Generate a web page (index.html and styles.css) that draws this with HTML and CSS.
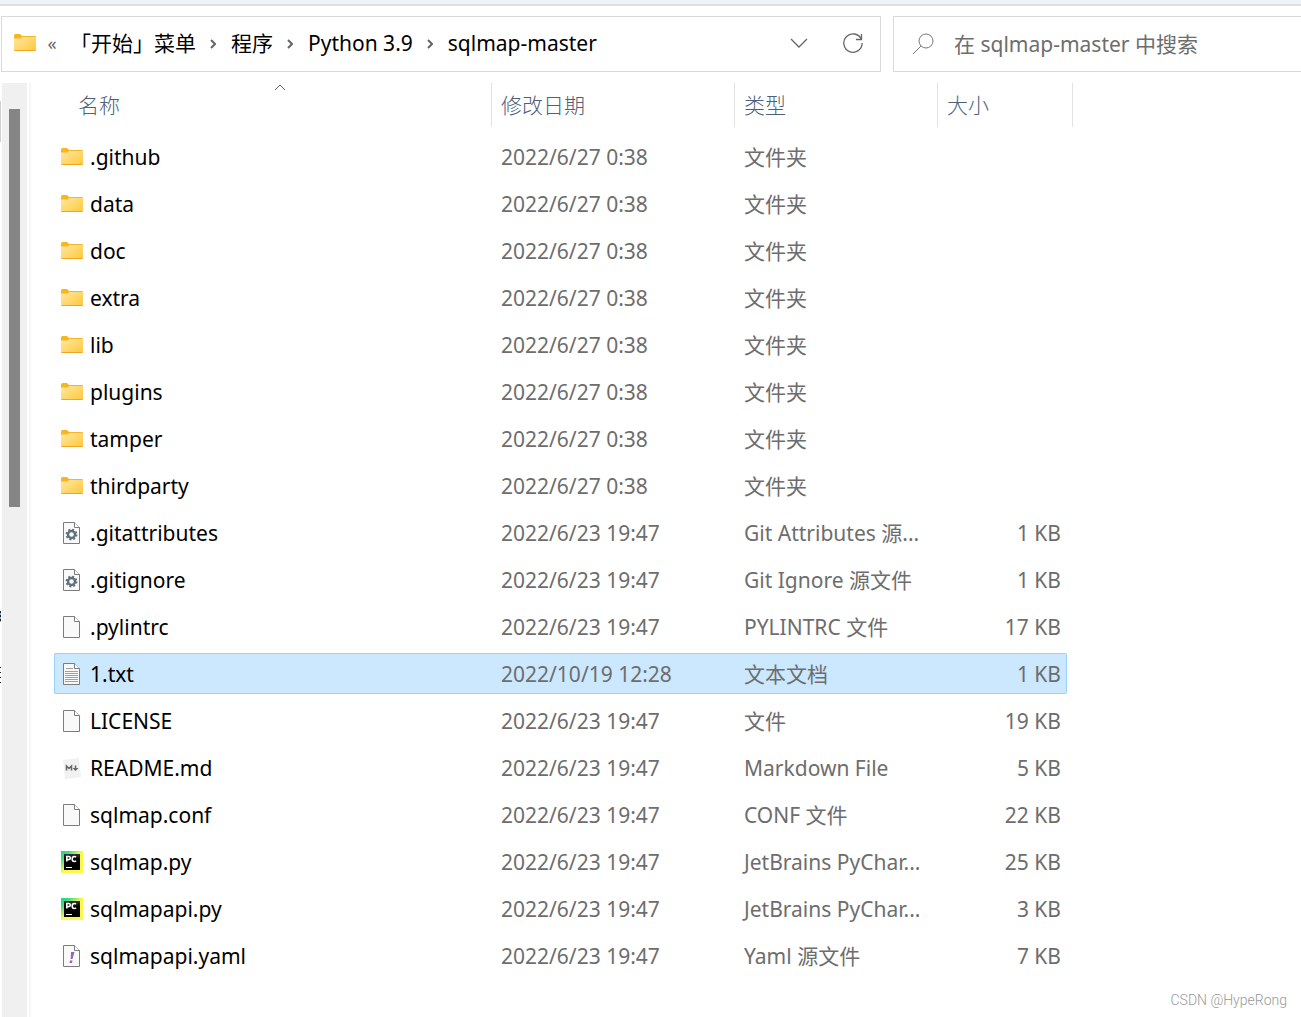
FILE: index.html
```html
<!DOCTYPE html>
<html lang="zh-CN">
<head>
<meta charset="utf-8">
<title>sqlmap-master</title>
<link rel="stylesheet" href="styles.css">
</head>
<body>
<svg class="defs" width="0" height="0" aria-hidden="true">
  <defs>
    <linearGradient id="folder-fill" x1="0" y1="0" x2="1" y2="1"><stop offset="0" stop-color="#ffe9a6"/><stop offset="1" stop-color="#ffc83a"/></linearGradient>
    <linearGradient id="pc-fill" x1="0" y1="0" x2="1" y2="1"><stop offset="0" stop-color="#21d789"/><stop offset="0.2" stop-color="#3ddc84"/><stop offset="0.5" stop-color="#fcf84a"/><stop offset="1" stop-color="#fcf84a"/></linearGradient>
    <linearGradient id="pc-box" x1="0" y1="0" x2="0" y2="1"><stop offset="0" stop-color="#333"/><stop offset="0.35" stop-color="#000"/></linearGradient>
    <symbol id="folder" viewBox="0 0 22 22"><path d="M0 3.5Q0 2 1.5 2H6l2 2v3H0z" fill="#f8b61c"/><path d="M0 6.5H7L8.5 4H21q1 0 1 1v13q0 1-1 1H1q-1 0-1-1z" fill="url(#folder-fill)"/><path d="M8 4.5H21.5" stroke="#f3b52c" fill="none"/><path d="M.5 18.5h21" stroke="#eda724"/></symbol>
    <symbol id="page" viewBox="0 0 22 22"><path d="M2.5.5h11l5 5v16h-16z" fill="#f9f9f9" stroke="#7c7c7c"/><path d="M13.5.5v5h5" fill="#fff" stroke="#7c7c7c"/></symbol>
    <symbol id="gear" viewBox="0 0 22 22"><use href="#page"/><circle cx="10.500" cy="12.500" r="3.500" fill="none" stroke="#5f727c" stroke-width="2.400"/><circle cx="10.500" cy="12.500" r="5" fill="none" stroke="#5f727c" stroke-width="1.800" stroke-dasharray="2 1.927"/></symbol>
    <symbol id="text" viewBox="0 0 22 22"><use href="#page"/><path d="M5 5.500h7M4 8.500h13M4 10.500h13M4 12.500h13M4 14.500h13M4 16.500h13M4 18.500h13" stroke="#a0a0a0"/></symbol>
    <symbol id="markdown" viewBox="0 0 22 22"><path d="M2 3l16-2 2 19-16 2z" fill="#f1f1f1"/><path d="M5.500 13.500V9l2.500 2.500L10.500 9v4.500M14.500 8.500v4" fill="none" stroke="#666" stroke-width="1.500"/><path d="M11.500 11h6L14.500 14z" fill="#666"/></symbol>
    <symbol id="pycharm" viewBox="0 0 22 22"><path d="M0 0h22v22H0z" fill="url(#pc-fill)"/><path d="M3 3h16v16H3z" fill="url(#pc-box)"/><path d="M5.800 10.500V5.500h2q1.500 0 1.500 1.500T7.800 8.600h-2M15 6.300Q14.300 5.500 13.300 5.500 11.200 5.500 11.200 8t2.100 2.500q1 0 1.700-.8" fill="none" stroke="#fff" stroke-width="1.600"/><path d="M5 16.500h6" stroke="#fff"/></symbol>
    <symbol id="yaml" viewBox="0 0 22 22"><use href="#page"/><path d="M10 7h3.500l-2 7H9.700zM9 15.500h2.500l-.5 2.500H8.500z" fill="#9068b0"/></symbol>
  </defs>
</svg>

<header class="toolbar">
  <nav class="address" aria-label="地址栏">
    <svg class="icon"><use href="#folder"/></svg>
    <button class="more" type="button">«</button>
    <a href="#">「开始」菜单</a>
    <svg class="sep" viewBox="0 0 6 10"><path d="M1 1l4 4-4 4"/></svg>
    <a href="#">程序</a>
    <svg class="sep" viewBox="0 0 6 10"><path d="M1 1l4 4-4 4"/></svg>
    <a href="#">Python 3.9</a>
    <svg class="sep" viewBox="0 0 6 10"><path d="M1 1l4 4-4 4"/></svg>
    <a href="#">sqlmap-master</a>
    <span class="actions">
      <button type="button" aria-label="历史记录"><svg width="18" height="10" viewBox="0 0 18 10"><path d="M1 1l8 8 8-8"/></svg></button>
      <button type="button" aria-label="刷新"><svg width="22" height="22" viewBox="0 0 22 22"><path d="M19.500 7.500A9.200 9.200 0 1 0 20.200 11M19.500 2v5.500H14"/></svg></button>
    </span>
  </nav>
  <label class="search">
    <svg width="22" height="22" viewBox="0 0 22 22"><circle cx="14" cy="8" r="7"/><path d="M9 13l-8 8"/></svg>
    <input type="search" placeholder="在 sqlmap-master 中搜索" aria-label="搜索">
  </label>
</header>

<div class="body">
  <aside class="scroll"><div class="thumb"></div></aside>
  <main>
    <table>
      <colgroup><col class="c-name"><col class="c-date"><col class="c-type"><col class="c-size"><col class="c-edge"></colgroup>
      <thead>
        <tr>
          <th><button type="button">名称</button><svg class="sort" viewBox="0 0 12 7"><path d="M1 6l5-5 5 5"/></svg></th>
          <th><button type="button">修改日期</button></th>
          <th><button type="button">类型</button></th>
          <th colspan="2"><button type="button">大小</button></th>
        </tr>
      </thead>
      <tbody>
        <tr><td><span class="file"><svg class="icon"><use href="#folder"/></svg>.github</span></td><td>2022/6/27 0:38</td><td>文件夹</td><td></td></tr>
        <tr><td><span class="file"><svg class="icon"><use href="#folder"/></svg>data</span></td><td>2022/6/27 0:38</td><td>文件夹</td><td></td></tr>
        <tr><td><span class="file"><svg class="icon"><use href="#folder"/></svg>doc</span></td><td>2022/6/27 0:38</td><td>文件夹</td><td></td></tr>
        <tr><td><span class="file"><svg class="icon"><use href="#folder"/></svg>extra</span></td><td>2022/6/27 0:38</td><td>文件夹</td><td></td></tr>
        <tr><td><span class="file"><svg class="icon"><use href="#folder"/></svg>lib</span></td><td>2022/6/27 0:38</td><td>文件夹</td><td></td></tr>
        <tr><td><span class="file"><svg class="icon"><use href="#folder"/></svg>plugins</span></td><td>2022/6/27 0:38</td><td>文件夹</td><td></td></tr>
        <tr><td><span class="file"><svg class="icon"><use href="#folder"/></svg>tamper</span></td><td>2022/6/27 0:38</td><td>文件夹</td><td></td></tr>
        <tr><td><span class="file"><svg class="icon"><use href="#folder"/></svg>thirdparty</span></td><td>2022/6/27 0:38</td><td>文件夹</td><td></td></tr>
        <tr><td><span class="file"><svg class="icon"><use href="#gear"/></svg>.gitattributes</span></td><td>2022/6/23 19:47</td><td>Git Attributes 源...</td><td>1 KB</td></tr>
        <tr><td><span class="file"><svg class="icon"><use href="#gear"/></svg>.gitignore</span></td><td>2022/6/23 19:47</td><td>Git Ignore 源文件</td><td>1 KB</td></tr>
        <tr><td><span class="file"><svg class="icon"><use href="#page"/></svg>.pylintrc</span></td><td>2022/6/23 19:47</td><td>PYLINTRC 文件</td><td>17 KB</td></tr>
        <tr class="selected"><td><span class="file"><svg class="icon"><use href="#text"/></svg>1.txt</span></td><td>2022/10/19 12:28</td><td>文本文档</td><td>1 KB</td></tr>
        <tr><td><span class="file"><svg class="icon"><use href="#page"/></svg>LICENSE</span></td><td>2022/6/23 19:47</td><td>文件</td><td>19 KB</td></tr>
        <tr><td><span class="file"><svg class="icon"><use href="#markdown"/></svg>README.md</span></td><td>2022/6/23 19:47</td><td>Markdown File</td><td>5 KB</td></tr>
        <tr><td><span class="file"><svg class="icon"><use href="#page"/></svg>sqlmap.conf</span></td><td>2022/6/23 19:47</td><td>CONF 文件</td><td>22 KB</td></tr>
        <tr><td><span class="file"><svg class="icon"><use href="#pycharm"/></svg>sqlmap.py</span></td><td>2022/6/23 19:47</td><td>JetBrains PyChar...</td><td>25 KB</td></tr>
        <tr><td><span class="file"><svg class="icon"><use href="#pycharm"/></svg>sqlmapapi.py</span></td><td>2022/6/23 19:47</td><td>JetBrains PyChar...</td><td>3 KB</td></tr>
        <tr><td><span class="file"><svg class="icon"><use href="#yaml"/></svg>sqlmapapi.yaml</span></td><td>2022/6/23 19:47</td><td>Yaml 源文件</td><td>7 KB</td></tr>
      </tbody>
    </table>
  </main>
</div>
<div class="watermark">CSDN @HypeRong</div>
</body>
</html>
```
FILE: styles.css
```css
* { box-sizing: border-box; }

body {
  margin: 0;
  min-height: 100vh;
  display: flex;
  flex-direction: column;
  position: relative;
  overflow: hidden;
  border-top: 4px solid #eef3f8;
  background: #fff;
  color: #000;
  font: 21px/28px "Noto Sans", "Noto Sans CJK SC", sans-serif;
}

button, input { font: inherit; color: inherit; border: 0; padding: 0; background: none; }
a { color: inherit; text-decoration: none; }
svg { flex: none; fill: none; stroke-width: 1; }
.defs { position: absolute; }
.icon { width: 22px; height: 22px; }

.toolbar {
  display: flex;
  gap: 12px;
  padding: 10px 0 0 1px;
  border-top: 2px solid #dbe0e4;
}
.address, .search {
  display: flex;
  align-items: center;
  height: 56px;
  border: 1px solid #d9d9d9;
}
.address { flex: 0 0 880px; padding: 0 16px 2px 12px; }
.more { width: 12px; margin: 0 12px 0 10px; color: #666; font-size: 18px; }
.sep { width: 6px; height: 10px; margin: 2px 15px 0 14px; stroke: #666; stroke-width: 2; }
.actions { display: flex; align-items: center; gap: 34px; margin-left: auto; stroke: #666; }
.actions button { display: flex; }
.actions svg { stroke-width: 1.3; }
.search { flex: 1; gap: 20px; padding-left: 18px; border-right: 0; color: #6d6d6d; }
.search svg { stroke: #777; }
.search input { flex: 1; min-width: 0; outline: 0; }
.search input::placeholder { color: #6d6d6d; opacity: 1; }

/* The navigation pane is scrolled out of view; only its last pixel column shows. */
.body {
  flex: 1;
  display: flex;
  padding: 11px 0 0 2px;
  background:
    linear-gradient(#d0d0d0, #d0d0d0) 0 29px / 1px 41px no-repeat,
    repeating-linear-gradient(#222 0 2px, #9ac 2px 4px) 0 539px / 1px 11px no-repeat,
    repeating-linear-gradient(#222 0 1px, #fff 1px 5px) 0 595px / 1px 16px no-repeat;
}
.scroll { width: 29px; padding: 26px 11px 0 7px; background: linear-gradient(90deg, #f0f0f0 25px, #fff 25px 27px, #f5f5f5 27px); }
.thumb { height: 398px; background: #858585; }

main { padding-left: 23px; }
table { width: 1019px; margin-top: -6px; table-layout: fixed; border-collapse: separate; border-spacing: 0 6px; }
.c-name { width: 438px; }
.c-date { width: 243px; }
.c-type { width: 203px; }
.c-size { width: 129px; }
.c-edge { width: 6px; }

th { position: relative; height: 47px; padding: 0 0 3px 9px; text-align: left; font-weight: 300; color: #4c607a; background: linear-gradient(#e2e2e2, #e2e2e2) right top / 1px 44px no-repeat; }
th:first-child { padding-left: 24px; }
.sort { position: absolute; top: 1px; left: 220px; width: 12px; height: 7px; stroke: #666; }

td { height: 41px; padding: 0 0 0 9px; color: #6d6d6d; white-space: nowrap; border: 1px solid transparent; border-width: 1px 0; }
td:first-child { padding-left: 6px; border-left-width: 1px; color: #000; }
td:nth-child(4) { padding: 0 5px 0 0; border-right-width: 1px; text-align: right; }
.file { display: flex; align-items: center; gap: 7px; }
.selected td { background: #cce8ff; border-color: #99d1ff; }
.selected td:first-child { border-radius: 2px 0 0 2px; }
.selected td:nth-child(4) { border-radius: 0 2px 2px 0; }

.watermark { position: absolute; right: 14px; bottom: 7px; color: #999; font: 300 14px/20px Roboto, sans-serif; }
```
